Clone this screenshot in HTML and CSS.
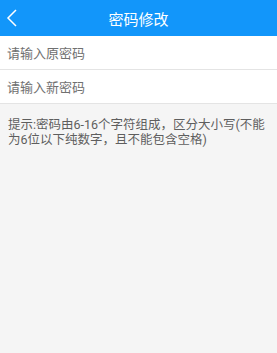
FILE: index.html
```html
<!DOCTYPE html>
<html lang="zh">
<head>
    <meta charset="UTF-8">
    <meta name="viewport" content="width=device-width, initial-scale=1.0">
    <title>密码修改</title>
    <link rel="stylesheet" href="styles.css">
</head>
<body>
<header class="top-bar">
    <a class="back" href="#">
        <svg width="12" height="20" viewBox="0 0 12 20"><polyline points="10,2 2,10 10,18" fill="none" stroke="#fff" stroke-width="1.5"/></svg>
    </a>
    <h1 class="title">密码修改</h1>
</header>

<main class="form">
    <div class="field"><input type="password" placeholder="请输入原密码"></div>
    <div class="field"><input type="password" placeholder="请输入新密码"></div>
    <p class="hint">提示:密码由6-16个字符组成，区分大小写(不能为6位以下纯数字，且不能包含空格)</p>
</main>
</body>
</html>
```

FILE: styles.css
```css
body {
    margin: 0;
    font-family: "Roboto", "Noto Sans CJK SC", sans-serif;
    background: #f5f5f5;
    color: #666;
}
.top-bar {
    height: 36px;
    background: #1296fa;
    display: flex;
    align-items: center;
    justify-content: center;
    position: relative;
}
.back {
    position: absolute;
    left: 6px;
    top: 8px;
    display: flex;
}
.title {
    margin: 0;
    font-size: 15px;
    font-weight: normal;
    color: #fff;
}
.field {
    background: #fff;
    height: 33px;
    border-bottom: 1px solid #e4e4e4;
    display: flex;
    align-items: center;
}
.field input {
    border: none;
    outline: none;
    width: 100%;
    padding: 1px 7px 0;
    font-family: inherit;
    font-size: 13px;
    background: transparent;
}
.field input::placeholder { color: #707070; }
.hint {
    margin: 0;
    padding: 13px 8px;
    font-size: 12.5px;
    line-height: 15px;
    color: #5e5e5e;
}
```
